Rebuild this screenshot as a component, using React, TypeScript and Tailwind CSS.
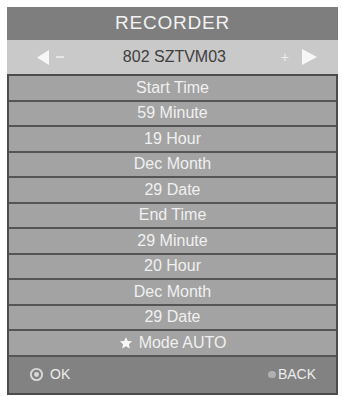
const rows = [
  'Start Time',
  '59 Minute',
  '19 Hour',
  'Dec Month',
  '29 Date',
  'End Time',
  '29 Minute',
  '20 Hour',
  'Dec Month',
  '29 Date',
]

const App = () => {
  return (
    <div className="h-[396px] w-[343px] bg-white pl-[7px] pt-[7px] font-['Liberation_Sans',Arial,sans-serif]">
      <div className="flex w-[331px] flex-col">
        {/* title */}
        <div className="flex h-[33px] items-center justify-center bg-[#7e7e7e] text-[19px] tracking-[0.04em] text-[#f2f2f2]">
          RECORDER
        </div>

        {/* channel */}
        <div className="flex h-[34px] items-center bg-[#c9c9c9] pl-[30px] pr-[21px] text-[16px] text-[#404040]">
          <div className="flex items-center gap-[7px]">
            <svg width="12" height="15" viewBox="0 0 12 15">
              <path d="M12 0 L0 7.5 L12 15 Z" fill="#f7f7f7" />
            </svg>
            <span className="h-[2px] w-[8px] bg-[#e6e6e6]" />
          </div>
          <div className="flex-1 pl-[4px] text-center">802 SZTVM03</div>
          <div className="flex items-center gap-[13px]">
            <span className="text-[14px] leading-none text-[#eeeeee]">+</span>
            <svg width="15" height="16" viewBox="0 0 15 16">
              <path d="M0 0 L15 8 L0 16 Z" fill="#f7f7f7" />
            </svg>
          </div>
        </div>

        {/* settings list */}
        <div className="border-x-2 border-t-2 border-[#4d4d4d]">
          {rows.map((label, i) => (
            <div
              key={i}
              className="flex h-[25.5px] items-center justify-center border-b-2 border-[#555555] bg-[#a3a3a3] text-[16px] text-[#f0f0f0]"
            >
              {label}
            </div>
          ))}
          <div className="flex h-[25.5px] items-center justify-center gap-[6px] border-b-2 border-[#555555] bg-[#a3a3a3] text-[16px] text-[#f0f0f0]">
            <svg width="14" height="14" viewBox="0 0 24 24">
              <path
                d="M12 1.5l3.1 7 7.4.6-5.6 4.9 1.7 7.4L12 17.5l-6.6 3.9 1.7-7.4L1.5 9.1l7.4-.6z"
                fill="#f7f7f7"
              />
            </svg>
            Mode AUTO
          </div>
        </div>

        {/* footer */}
        <div className="flex h-[38px] items-center justify-between border-x-2 border-b-2 border-[#4d4d4d] bg-[#828282] pl-[20px] pr-[20px] text-[14px] text-[#ececec]">
          <div className="flex items-center gap-[6px]">
            <svg width="15" height="15" viewBox="0 0 16 16">
              <circle cx="8" cy="8" r="6" fill="none" stroke="#d9d9d9" strokeWidth="2" />
              <circle cx="8" cy="8" r="2.6" fill="#d9d9d9" />
            </svg>
            OK
          </div>
          <div className="flex items-center gap-[2px]">
            <span className="h-[7px] w-[8px] rounded-full bg-[#b0b0b0]" />
            BACK
          </div>
        </div>
      </div>
    </div>
  )
}

export default App
